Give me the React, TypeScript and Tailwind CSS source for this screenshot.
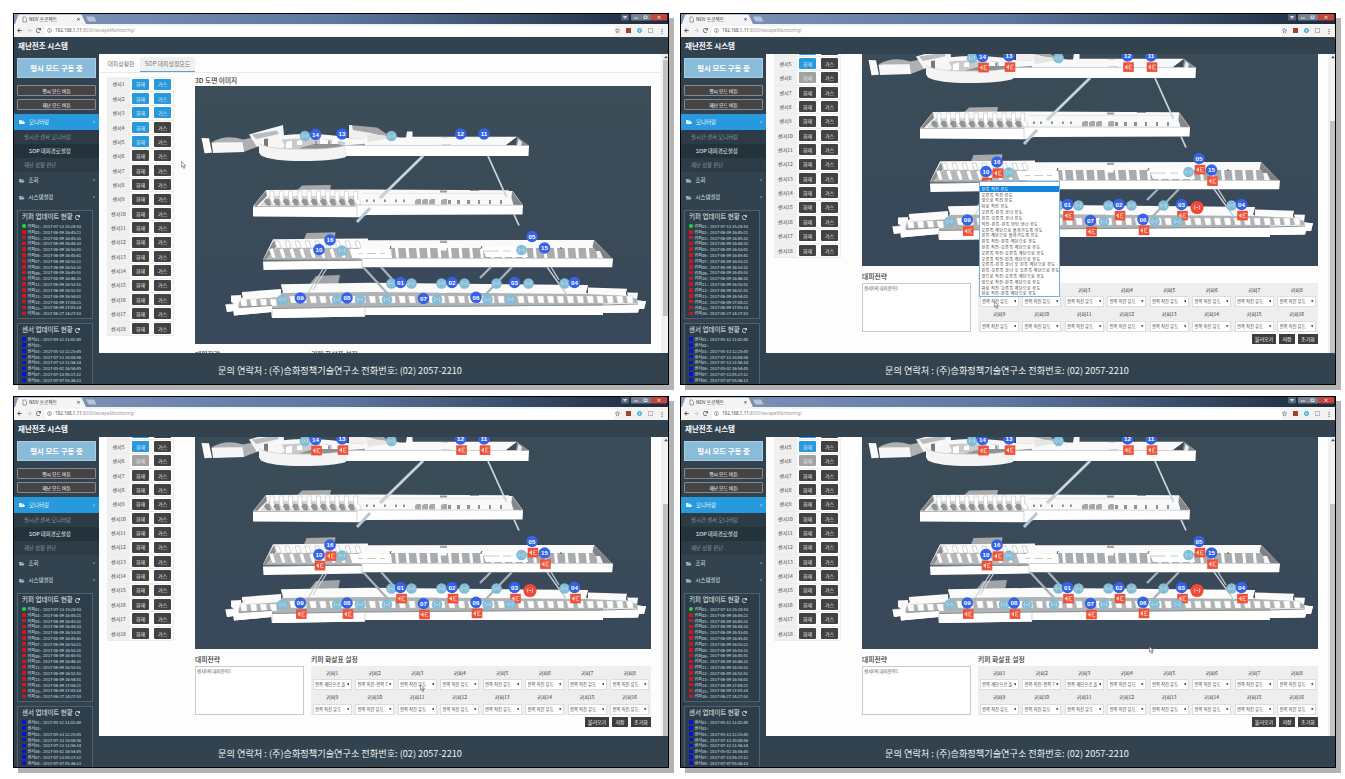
import React from "react";
import { FaFolderOpen, FaRedo, FaRegStar, FaArrowLeft, FaArrowRight } from "react-icons/fa";

type Marker = [string, number, number];

const KEEPERS: Marker[] = [
  ["14", 315.5, 134.5], ["13", 342, 134], ["12", 460.5, 134], ["11", 484, 134],
  ["10", 319, 249.5], ["16", 330, 240], ["05", 532, 236.5], ["15", 544.5, 248],
  ["01", 400.5, 282.5], ["02", 452, 282.5], ["03", 514.5, 282.5], ["04", 574.5, 282.5],
  ["09", 300.3, 298], ["08", 347, 298], ["07", 423.5, 298.5], ["06", 476, 297.3],
];

const SENSORS: [number, number][] = [
  [305, 136], [391.5, 136], [342, 250.5], [521.5, 250], [391.5, 283.5], [411.5, 283.5],
  [441.5, 283.5], [464.5, 283.5], [496.5, 283.5], [528.5, 283.5], [564.5, 283.5],
  [282.5, 299.5], [337, 299.5], [360, 299.5], [387, 299.5], [437, 299.5],
  [487.5, 299.5], [510.5, 299.5],
];

const range = (n: number) => Array.from({ length: n }, (_, i) => i);

function Signal({ x, y, r, fill, stroke }: { x: number; y: number; r: number; fill: string; stroke: string }) {
  return (
    <g>
      <circle cx={x} cy={y} r={r} fill={fill} />
      <path
        d={`M${x - 2} ${y - 2.2}q-1.6 2.2 0 4.4M${x + 2} ${y - 2.2}q1.6 2.2 0 4.4M${x - 1.2} ${y}h2.4`}
        fill="none" stroke={stroke} strokeWidth="0.8"
      />
    </g>
  );
}

function TopFloor() {
  return (
    <g>
      <path d="M201.500 138L209 138.300L212 152.800L204.500 153.300z" fill="#fbfbfb" />
      <path d="M212 142Q226 134 243 139.500L253 137.500L258 146.500L243.500 152z" fill="#aeb0b2" />
      <path d="M211.500 142.500L242.500 142.200L244 152L213 153z" fill="#f7f7f7" />
      <path d="M249 134.500L283 125L284.200 137.500L267 142L257 147z" fill="#f5f5f5" />
      <path d="M252 134.500L277 130.500L279 134L256 139z" fill="#b9bbbc" />
      <path d="M349 125L377 127.500L386 133.500L398 137L397 146L349 145z" fill="#a3a5a6" />
      <path d="M349 125L352 125.200L353 130L371 133L385 137L383 140L349 138z" fill="#f0f0f0" />
      <path d="M259 146Q261 135 301 134Q333 134 347 138L368 139V153H259z" fill="#f8f8f8" />
      <path d="M264 146Q264 139 302 138.500Q332 138.500 345 142.500V146Q330 149 302 149T264 146z" fill="#c9cacb" />
      <path d="M266 141L281 138L285 146L281 149L267 147z" fill="#f6f6f6" />
      <path d="M264 139L268 138.500V147L264 145z" fill="#77797a" />
      <path d="M286 142L292 140.500V148H286zM297 141L302 140V145H297zM320 139L328 140V145H320zM332 140H338V145H332z" fill="#fff" />
      <path d="M298 148.500L314 144H338L345 146.500L328 149z" fill="#8f9193" />
      <path d="M316 141V145M329 141V144" stroke="#55585a" strokeWidth=".8" />
      <path d="M259 143.500Q266 149 302 149.300Q332 149.300 345.500 145.500L346 157Q332 161 303 161Q271 161 261 155.500Q258.500 153 259 143.500z" fill="#f4f4f4" />
      <path d="M259 143.500Q266 149 302 149.300Q332 149.300 345.500 145.500V156" fill="none" stroke="#c3c4c5" strokeWidth=".6" />
      <path d="M365.500 134L382.500 135.500L400.500 137.500H406L407 131.500H412.500V136.700H517L505 145.700H346V142.700L366 139.700z" fill="#f9f9f9" />
      <path d="M366 134L382 135L392 138L368 142z" fill="#e5e5e4" />
      <path d="M346 145.200L365 143.700V145.700H346z" fill="#95989a" />
      <path d="M345.500 146L367 145.500L529 145.300L528.500 156H345.500z" fill="#fff" />
      <path d="M517 136.500L529 145.500H516z" fill="#8b8e90" />
      <path d="M518.500 139L522 142L521 146H517z" fill="#e9e9e9" />
      <path d="M346 145.500H516M441.500 137.500H448M441.500 144.500H451" stroke="#bfc1c2" strokeWidth=".6" />
    </g>
  );
}

function SecondFloor() {
  return (
    <g>
      <path d="M297 190.500L302 185.500L331 185L330 190.500z" fill="#a7a9aa" />
      <path d="M266 190L363 189.500L512 190.300L523 205.300V206.300H253z" fill="#f9f9f9" />
      <path d="M266 190.500L254 205.500L257 206L267 196z" fill="#85888a" />
      <path d="M512 191L522.500 205H513.500L511.500 198z" fill="#85888a" />
      <path d="M269 196H358V205.500H260z" fill="#d7d8d8" />
      {range(10).map((i) => (
        <g key={i}>
          <path d={`M${267 + i * 9.3} 205.500l-3-4 2-3 4 1 1 6z`} fill="#929496" />
          <path d={`M${270 + i * 9.3} 191h4v8l3 2v4h-4l-3-6z`} fill="#fff" stroke="#aaa" strokeWidth=".4" />
        </g>
      ))}
      <path d="M362 193.500H508" stroke="#dcdddd" strokeWidth=".6" />
      {[366, 373, 384, 395, 403].map((x) => <rect key={x} x={x} y="199.500" width="1.800" height="2.500" fill="#888b8d" />)}
      {[415, 422, 429, 441].map((x) => <path key={x} d={`M${x} 204.500v-4l2-1.500h4v5.500z`} fill="#a7a9ab" />)}
      {[448, 457, 467, 478, 489, 500].map((x) => <rect key={x} x={x} y="200" width={x < 470 ? 3 : 2} height="4" fill="#8f9193" />)}
      <path d="M440 190.500H447V192.500H440zM470 190H479V191H470z" fill="#999" />
      <path d="M253 206.500L357 206.200V204.700L523 205L522.500 214.500L367 215L358 217.200L253 216.500z" fill="#fff" />
      <path d="M253 206.500L357 206.200V216.500M357 205L523 205.200" fill="none" stroke="#b5b7b8" strokeWidth=".6" />
    </g>
  );
}

function ThirdFloor() {
  return (
    <g>
      <path d="M304 239.500L306.500 233L335.500 232.200L334.500 239.200z" fill="#a5a7a9" />
      <path d="M273 239.200L368 238.600V240.200L594 240L613 259.500H263z" fill="#fafafa" />
      <path d="M274 240L263 260L267 259L276 247z" fill="#8c8e90" />
      <path d="M276 248H359L361 259H267z" fill="#b7b8b9" />
      {range(9).map((i) => (
        <g key={i}>
          <path d={`M${275 + i * 10} 241h4l2 7h-4z`} fill="#fff" stroke="#999" strokeWidth=".4" />
          <path d={`M${269 + i * 10} 249l4-1 3 10h-4z`} fill="#fff" stroke="#999" strokeWidth=".4" />
        </g>
      ))}
      <path d="M391 248H593L607 258H392z" fill="#a9abac" />
      {range(20).map((i) => <path key={i} d={`M${395 + i * 10.6} 248h3l1 10h-3z`} fill="#fff" />)}
      <path d="M352 249H391V258H352zM482 247H526L528 257H486z" fill="#fff" />
      <path d="M358 253.500h5m4 0h9m4 0h5M484 251h15m4 0h8" stroke="#b3b4b5" strokeWidth=".7" />
      <path d="M439.500 240.500H446.500V250.500H439.500z" fill="#fff" />
      <path d="M440 240.500H447V243H440z" fill="#a5a7a8" />
      <path d="M594 240.500L612.500 259L602.500 258L592.500 247z" fill="#7f8284" />
      <path d="M596 251H600L603 258H598z" fill="#f5f5f5" />
      <path d="M480.500 249l1.500-3M390 249l1-3M560 248h2" stroke="#555" strokeWidth="1" />
      <path d="M263 261.500L362 260.500V258.500L613 258.800L612.200 267.300H363V268.500L263.500 270z" fill="#fff" />
      <path d="M263 261L362 259.800V268M362 258.500H613" fill="none" stroke="#b3b5b6" strokeWidth=".6" />
    </g>
  );
}

function GroundFloor() {
  return (
    <g>
      <path d="M309 285L316 276L340 275L338 285z" fill="#a1a4a6" />
      <path d="M281 284.300L369 282.800L588 285V287.500L627 288.800V292.500L638 292.800L637 300L646 301.500L644 309H639L638 312.500L603 313V315H365V316.500L272 318L271.500 312L234 315.500L233.500 311L227 312L225.500 304.500L234 303.500L231 302V295.500L242 295V292L281 289z" fill="#fbfbfb" />
      <path d="M281 293L369 292L588 294L628 296L637 299L638 304L603 306L365 307.500L272 309L238 307L240 300L281 297z" fill="#b0b2b3" />
      <path d="M281 285L283 292L281 294zM588 285.500V293.500L586 292.500zM626 289L628 296L626 295zM241 292L243 297L241 298z" fill="#56595b" />
      {range(40).map((i) => (
        <path
          key={i}
          d={`M${240 + i * 9.9} ${i < 4 ? 299 : 296}h6.500l.7 7h-5.600z`}
          fill="#fff" stroke="#c0c1c2" strokeWidth=".4"
        />
      ))}
      <path d="M225.500 304.500L234 303.800L239 308L272 305.500V308.500L365 307V307.500L603 305.500V303.500L638 303L640 301H646L644 309H639L638 312.500L603 313V315H365V316.500L272 318L271.500 312L234 315.500L233.500 311L227 312z" fill="#fff" />
      <path d="M239 307.500L272 305.500M272 308.500L365 307M365 307L603 305L638 304" fill="none" stroke="#8e9192" strokeWidth="1" />
      <path d="M272 310V317.500M365 308V316M226 304.500L234 304" fill="none" stroke="#b3b5b6" strokeWidth=".6" />
      <path d="M439 283H446V293H439z" fill="#fff" />
    </g>
  );
}

function Scene({ alarm }: { alarm: boolean }) {
  return (
    <svg viewBox="195 86 456 258" className="block h-[258px] w-[456px] bg-linear-to-b from-[#3b4d57] to-[#39485a]">
      <TopFloor />
      <SecondFloor />
      <path d="M423 156L380 198M370 208L357 222" stroke="#b9c8d0" strokeWidth="3" />
      <path d="M423 156L380 198" stroke="#dde5e8" strokeWidth="1" />
      <path d="M488 156L506.500 197M514 214.500L519 225.500" stroke="#cad5da" strokeWidth="1.800" />
      <ThirdFloor />
      <GroundFloor />
      <g stroke="#a8b2b8" strokeWidth="1.600" fill="none">
        <path d="M323 269l-15 24M327 268l-14 22" strokeWidth="1.200" stroke="#cdd3d6" />
        <path d="M363 267l25 27M381 267l11 12" strokeWidth="2.300" />
        <path d="M491 267l-11 11M512 267l-27 28" strokeWidth="2.300" />
        <path d="M547 267l20 28M551 267l8 13" stroke="#c9d0d4" strokeWidth="1.300" />
      </g>
      {alarm && KEEPERS.map(([id, x, y]) => (
        <g key={id}>
          <rect x={x - 4.3} y={y + 6.3} width="10.600" height="9.600" fill="#ee5136" />
          <path d={`M${x - 3} ${y + 11.1}l3-2.600v5.200z`} fill="#ffc9bd" />
          <path d={`M${x + 4.8} ${y + 9}h-3.200v4.200h3.200M${x + 1.6} ${y + 11.1}h2`} stroke="#ffc9bd" strokeWidth=".8" fill="none" />
        </g>
      ))}
      {SENSORS.map(([x, y], i) =>
        alarm && i === 9
          ? <Signal key={i} x={530} y={285.5} r={6.6} fill="#f04a37" stroke="#ffe3de" />
          : <Signal key={i} x={x} y={y} r={5.3} fill="#84bbd5" stroke="#c3e2ef" />
      )}
      {KEEPERS.map(([id, x, y]) => (
        <g key={id}>
          <circle cx={x} cy={y} r="5.800" fill="#3563e6" />
          <text x={x} y={y + 2.2} textAnchor="middle" className="fill-white font-['Liberation_Sans'] text-[6.2px] font-bold">{id}</text>
        </g>
      ))}
    </svg>
  );
}

const KEEPER_LOG = [
  "2017-07-13 15:28:53", "2017-06-09 16:45:21", "2017-06-09 16:45:31", "2017-06-09 16:44:33",
  "2017-06-09 16:53:01", "2017-06-09 16:45:41", "2017-06-09 16:53:21", "2017-06-09 16:53:31",
  "2017-06-09 16:45:51", "2017-06-09 16:46:31", "2017-06-09 16:53:51", "2017-06-09 16:52:51",
  "2017-06-09 16:54:01", "2017-06-09 17:04:21", "2017-06-09 17:05:14", "2017-06-27 14:27:53",
];
const SENSOR_LOG = [
  "2017-05-12 11:02:40", "", "2017-05-13 12:25:45", "2017-07-13 10:08:56",
  "2017-07-13 11:56:14", "2017-05-02 16:54:45", "2017-07-13 05:17:12", "2017-07-07 05:36:13",
];

function LogPanel({ title, label, rows, sensor }: { title: string; label: string; rows: string[]; sensor?: boolean }) {
  return (
    <div className="ml-[3px] w-[76px] shrink-0 border border-[#4e626f] bg-[#2d3e4a] pb-[2px]">
      <div className="flex h-[12px] items-center gap-[2px] pl-[4px] text-[6.5px] text-[#e3e8ea]">
        {title}<FaRedo className="size-[5px]" />
      </div>
      {rows.map((r, i) => (
        <div key={i} className="flex h-[5.83px] items-center whitespace-pre pl-[4px] text-[4px] text-[#dce2e5]">
          <span className={`mr-[2px] size-[3.6px] shrink-0 ${sensor ? "bg-[#0a10d8]" : i === 0 ? "rounded-full bg-[#18dc35]" : "bg-[#d4141c]"}`} />
          <span className="w-[15.500px] shrink-0 leading-none">{label}{String(i + 1).padStart(2, "0")} :</span>
          <span className="text-[4.1px] leading-none">{r}</span>
        </div>
      ))}
    </div>
  );
}

function Sidebar() {
  return (
    <aside className="flex h-[330px] w-[85px] shrink-0 flex-col overflow-hidden bg-[#32434f]">
      <div className="mx-[3px] mt-[4px] flex h-[20px] shrink-0 items-center justify-center border border-[#a5cde4] bg-[#8abbd9] text-[7.4px] font-bold text-white">평시 모드 구동 중</div>
      <div className="mx-[3px] mt-[7px] flex h-[11px] shrink-0 items-center justify-center rounded-[1px] border border-[#88898a] bg-[#444] text-[4.8px] text-white">평시 모드 버튼</div>
      <div className="mx-[3px] mt-[3px] flex h-[11px] shrink-0 items-center justify-center rounded-[1px] border border-[#88898a] bg-[#444] text-[4.8px] text-white">재난 모드 버튼</div>
      <div className="mt-[4px] flex h-[16px] shrink-0 items-center bg-[#2799dd] pl-[5px] text-[5.4px] text-white">
        <FaFolderOpen className="mr-[4px] size-[6px]" />모니터링<span className="ml-auto mr-[4px] font-bold">‹</span>
      </div>
      <div className="shrink-0 bg-[#2c3b45] text-[5.4px] text-[#8b9aa4]">
        <div className="flex h-[14px] items-center pl-[10px]">실시간 센서 모니터링</div>
        <div className="flex h-[14px] items-center bg-[#24323c] pl-[15px] text-[#f3f5f6]">SOP 대피경로설정</div>
        <div className="flex h-[14px] items-center pl-[10px]">재난 상황 판단</div>
      </div>
      {["조회", "시스템설정"].map((t) => (
        <div key={t} className="flex h-[17px] shrink-0 items-center pl-[5px] text-[5.4px] text-[#dfe5e8]">
          <FaFolderOpen className="mr-[4px] size-[5.5px] text-[#aebbc3]" />{t}<span className="ml-auto mr-[4px] font-bold">‹</span>
        </div>
      ))}
      <div className="h-[4px] shrink-0" />
      <LogPanel title="키퍼 업데이트 현황" label="키퍼" rows={KEEPER_LOG} />
      <div className="h-[4px] shrink-0" />
      <LogPanel title="센서 업데이트 현황" label="센서" rows={SENSOR_LOG} sensor />
    </aside>
  );
}

function SensorTable({ alarm }: { alarm: boolean }) {
  return (
    <div className="ml-[8px] mt-[3.500px] w-[67px] border-r border-t border-[#eee]">
      {range(18).map((i) => (
        <div key={i} className="flex h-[14.36px] items-center border-b border-[#ececec] text-[5px]">
          <span className="flex h-full w-[23px] items-center justify-center bg-[#f0f0f0] text-[#444]">센서{i + 1}</span>
          <span className={`ml-[2px] flex h-[11px] w-[17px] items-center justify-center rounded-[1px] text-[#e9e9e9] ${i < 5 ? "bg-[#2799dd]" : alarm && i === 5 ? "bg-[#a2a2a2]" : "bg-[#424242]"}`}>화재</span>
          <span className={`ml-[5px] flex h-[11px] w-[17px] items-center justify-center rounded-[1px] text-[#e9e9e9] ${i < 3 ? "bg-[#2799dd]" : "bg-[#424242]"}`}>가스</span>
        </div>
      ))}
    </div>
  );
}

const OPTIONS = [
  "왼쪽 직진 유도", "오른쪽 직진 유도", "앞으로 직진 유도", "뒤로 직진 유도",
  "오른쪽-왼쪽 코너 유도", "왼쪽-오른쪽 코너 유도", "직진-왼쪽-왼쪽 유턴 코너 유도",
  "오른쪽 계단으로 올라가도록 유도", "왼쪽 계단으로 올라가도록 유도",
  "왼쪽 직진-왼쪽 계단으로 유도", "왼쪽 직진-오른쪽 계단으로 유도",
  "오른쪽 직진-오른쪽 계단으로 유도", "오른쪽 직진-왼쪽 계단으로 유도",
  "오른쪽-왼쪽 코너 후 왼쪽 계단으로 유도", "왼쪽-오른쪽 코너 후 오른쪽 계단으로 유도",
  "앞으로 직진-오른쪽 계단으로 유도", "앞으로 직진-왼쪽 계단으로 유도",
  "뒤로 직진-오른쪽 계단으로 유도", "뒤로 직진-왼쪽 계단으로 유도",
];

function Strategy({ picks }: { picks: string[] }) {
  return (
    <div>
      <div className="flex h-[17px] items-center pt-[4px] text-[6.8px] font-medium text-[#333]">
        <span className="w-[116px]">대피전략</span><span>키퍼 화살표 설정</span>
      </div>
      <div className="flex">
        <div className="mr-[7px] h-[49px] w-[109px] border border-[#c9c9c9] bg-white pl-[1px] pt-[1px] text-[4.4px] leading-[6px] text-[#555]">센서6의 대피전략1</div>
        <div className="w-[340px]">
          <div className="grid grid-cols-8 bg-[#eeeeee]">
            {[0, 1].map((row) => (
              <React.Fragment key={row}>
                {range(8).map((i) => (
                  <div key={i} className="flex h-[13px] items-center justify-center text-[5px] text-[#333]">키퍼{row * 8 + i + 1}</div>
                ))}
                {range(8).map((i) => (
                  <div key={i} className="flex h-[11.6px] items-start px-[1.5px]">
                    <div className="flex h-[11px] w-[39px] items-center justify-between border border-[#ddd] bg-white pl-[1.5px] pr-[1.500px] text-[4.4px] text-[#444]">
                      <span className="whitespace-nowrap">{(row === 0 && picks[i]) || "왼쪽 직진 유도"}</span>
                      <svg viewBox="0 0 4 4" className="size-[2.500px] shrink-0"><path d="M0 .5h4L2 4z" fill="#333" /></svg>
                    </div>
                  </div>
                ))}
              </React.Fragment>
            ))}
          </div>
        </div>
      </div>
      <div className="mt-[2px] flex justify-end gap-[3px] text-[5px] text-white">
        <span className="flex h-[10px] w-[24px] items-center justify-center bg-[#3d3d3d]">불러오기</span>
        <span className="flex h-[10px] w-[16px] items-center justify-center bg-[#3d3d3d]">저장</span>
        <span className="flex h-[10px] w-[20px] items-center justify-center bg-[#3d3d3d]">초기화</span>
      </div>
    </div>
  );
}

function Chrome() {
  return (
    <>
      <div className="flex h-[10px] overflow-hidden bg-linear-to-r from-[#8097b8] via-[#5b779e] via-50% to-[#1b2a3c]">
        <svg viewBox="0 0 90 10" className="h-[10px] w-[90px] shrink-0">
          <path d="M1 10L4 1.500Q4.500 .5 6 .5H66Q67.500 .5 68 1.500L72 10z" fill="#f3f4f5" />
          <path d="M72 2.500h8l2.500 5h-8z" fill="#b6c4d4" />
          <path d="M9 3h2.200l1.300 1.300V8H9z" fill="none" stroke="#666" strokeWidth=".6" />
          <text x="15" y="7.400" className="fill-[#333] text-[4.8px]">NDV 프로젝트</text>
          <path d="M63.500 4l2 2.500m0-2.500l-2 2.500" stroke="#444" strokeWidth=".8" />
        </svg>
        <svg viewBox="0 0 48 8" className="ml-auto h-[8px] w-[48px] shrink-0">
          <rect x="1" y="0" width="8" height="6.500" rx="1" fill="#56657a" />
          <rect x="11" y="0" width="20" height="6.500" rx="1" fill="#76808f" />
          <rect x="31" y="0" width="16" height="6.500" rx="1" fill="#c2453e" />
          <path d="M3.500 2.500h3l-1.500 2zM14 4h4M24 2h3v2.500h-3zM37.500 1.800l3 3m0-3l-3 3" fill="none" stroke="#e8ebef" strokeWidth=".9" />
        </svg>
      </div>
      <div className="flex h-[13px] items-center bg-[#f3f3f4] text-[#555]">
        <FaArrowLeft className="ml-[3px] size-[5px]" />
        <FaArrowRight className="ml-[5px] size-[5px] text-[#ccc]" />
        <FaRedo className="ml-[4px] size-[5px]" />
        <div className="ml-[4px] flex h-[10px] w-[570px] items-center bg-white pl-[2px]">
          <svg viewBox="0 0 10 10" className="size-[5px]"><circle cx="5" cy="5" r="4" fill="none" stroke="#555" /><path d="M5 2v1.500M5 4.500V8" stroke="#555" /></svg>
          <span className="ml-[3px] font-['Noto_Sans'] text-[4.500px] text-[#444]">192.168.1.11<span className="text-[#999]">:8000/escapeMonitoring/</span></span>
        </div>
        <FaRegStar className="size-[5px]" />
        <span className="ml-[6px] size-[5px] bg-[#a3402f]" />
        <span className="ml-[6px] size-[5px] rounded-full border-[1.500px] border-[#28a0d0] bg-[#8fd8ee]" />
        <span className="ml-[6px] size-[5px] border border-[#bbb]" />
        <span className="ml-[6px] text-[6px] font-bold leading-none">⋮</span>
      </div>
    </>
  );
}

interface WindowProps {
  scrolled?: boolean;
  menuOpen?: boolean;
  picks?: string[];
  cursor: string;
}

function MonitorWindow({ scrolled = false, menuOpen = false, picks = [], cursor }: WindowProps) {
  return (
    <section className="relative h-[372px] w-[656px] border border-black bg-[#32434f] shadow-[5px_5px_0_#b3b3b3]">
      <Chrome />
      <header className="flex h-[17px] items-center pl-[4px] text-[7.500px] font-bold text-white">재난전조 시스템</header>
      <div className="flex h-[330px]">
        <Sidebar />
        <main className="w-[569px]">
          <div className="flex h-[299px] overflow-hidden bg-[#fdfdfd]">
            <div className={`w-[562px] ${scrolled ? "-mt-[78px]" : ""}`}>
              <nav className="flex h-[19px] items-end border-b border-[#eaeaea] pl-[3px] text-[5.900px] text-[#777]">
                <span className="flex h-[15px] w-[38px] items-center justify-center">대피상황판</span>
                <span className="flex h-[15px] w-[55px] items-center justify-center border-b border-[#5aa5cf] bg-[#f0f0f0]">SOP 대피설정모드</span>
              </nav>
              <div className="flex items-start">
                <SensorTable alarm={scrolled} />
                <div className="ml-[21px] w-[456px]">
                  <h2 className="flex h-[13px] items-center pt-px text-[6.7px] font-medium text-[#333]">3D 도면 이미지</h2>
                  <Scene alarm={scrolled} />
                  <Strategy picks={picks} />
                </div>
              </div>
            </div>
            <div className="flex w-[7px] flex-col items-end bg-[#f0f1f1]">
              <svg viewBox="0 0 5 5" className="mt-[1px] size-[4px]"><path d="M0 4h5L2.500 1z" fill="#555" /></svg>
              <div className={`w-[5px] bg-[#c2c2c2] ${scrolled ? "mt-[62px] h-[232px]" : "mt-[1px] h-[256px]"}`} />
            </div>
          </div>
          <footer className="flex h-[31px] items-center justify-center pb-px pr-[87px] pt-[5px] text-[9.170px] text-[#f1f4f5]">
            <span className="whitespace-nowrap">문의 연락처 : (주)승화정책기술연구소 전화번호: (02) 2057-2210</span>
          </footer>
        </main>
      </div>
      {menuOpen && (
        <div className="absolute left-[298px] top-[167px] h-[116px] w-[81px] overflow-hidden border border-[#79afd8] bg-white pt-[4px] text-[4.100px] tracking-[.35px] text-[#333]">
          {OPTIONS.map((o, i) => (
            <div key={o} className={`flex h-[5.820px] items-center whitespace-nowrap pl-[1.500px] leading-none ${i === 0 ? "bg-[#1683dc] text-white" : ""}`}>{o}</div>
          ))}
        </div>
      )}
      <svg viewBox="0 0 8 12" className={`absolute h-[8px] w-[5px] ${cursor}`}>
        <path d="M.5 .5v9l2.200-2 1.700 4 1.600-.7-1.700-3.700h3z" fill="#fff" stroke="#444" strokeWidth=".9" />
      </svg>
    </section>
  );
}

export default function App() {
  const left = "왼쪽 계단으로 올";
  const leftLeft = "왼쪽 직진-왼쪽 7";
  return (
    <div className="grid h-[779px] w-[1345px] grid-cols-[656px_656px] grid-rows-[372px_372px] gap-[11px] overflow-hidden bg-white pl-[13px] pt-[13px] font-['Noto_Sans_CJK_KR','Noto_Sans',sans-serif]">
      <MonitorWindow cursor="left-[167px] top-[147px]" />
      <MonitorWindow scrolled menuOpen cursor="left-[313px] top-[287px]" />
      <MonitorWindow scrolled picks={[left, leftLeft]} cursor="left-[406px] top-[287px]" />
      <MonitorWindow scrolled picks={[left, leftLeft, left]} cursor="left-[468px] top-[249px]" />
    </div>
  );
}
